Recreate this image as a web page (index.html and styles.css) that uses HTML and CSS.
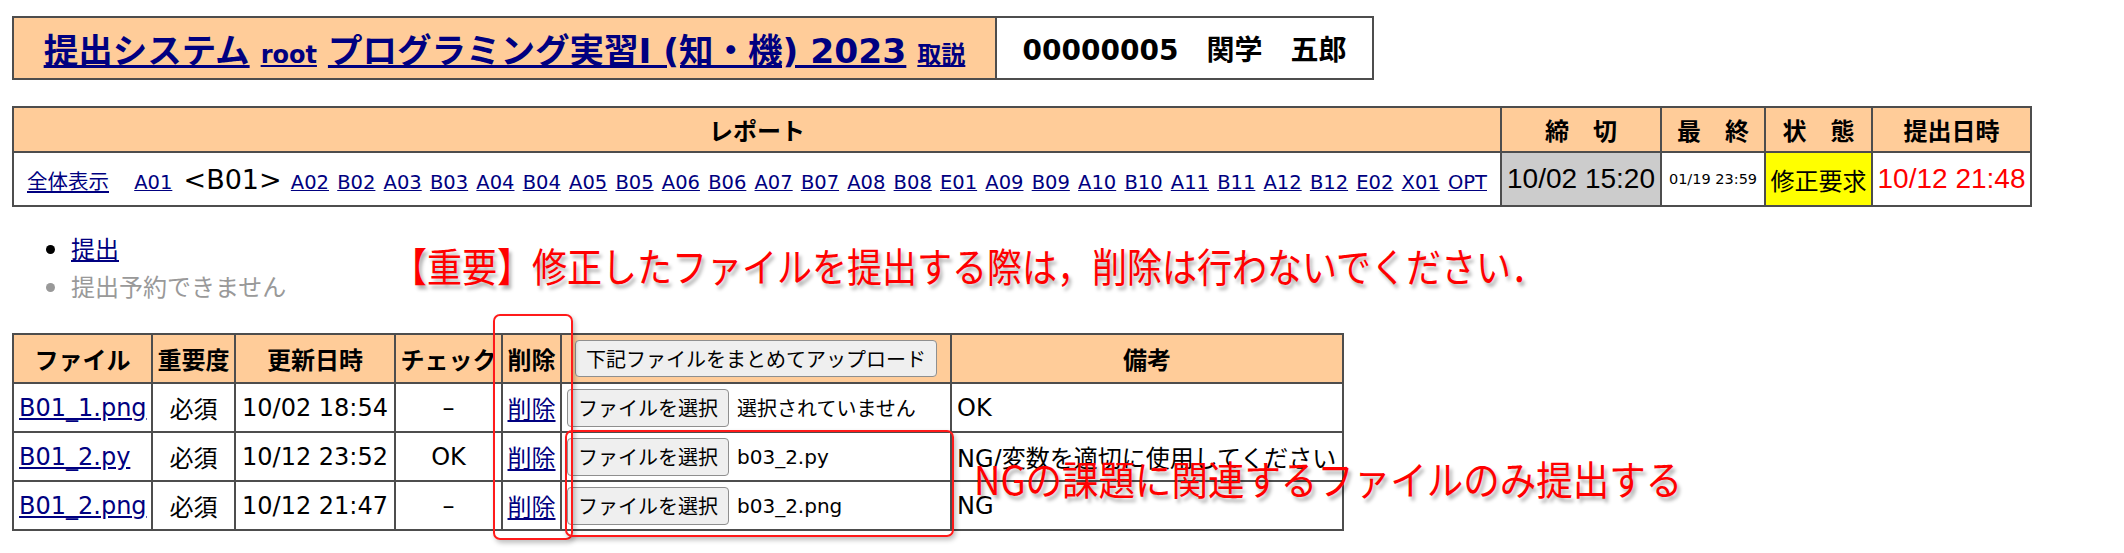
FILE: index.html
```html
<!DOCTYPE html>
<html lang="ja">
<head>
<meta charset="UTF-8" />
<meta name="viewport" content="width=device-width, initial-scale=1" />
<title>提出システム</title>
<link rel="stylesheet" href="styles.css">
</head>
<body>
  <div class="page">
    <table class="title-bar">
      <colgroup>
        <col class="c-title">
        <col class="c-user">
      </colgroup>
      <tr>
        <td class="title-links">
          <div class="title-row">
            <a href="#" class="big">提出システム</a>
            <a href="#" class="small">root</a>
            <a href="#" class="big">プログラミング実習Ⅰ (知・機) 2023</a>
            <a href="#" class="small">取説</a>
          </div>
        </td>
        <td class="user">00000005　関学　五郎</td>
      </tr>
    </table>

    <table class="reports">
      <colgroup>
        <col class="c-report">
        <col class="c-deadline">
        <col class="c-final">
        <col class="c-status">
        <col class="c-submitted">
      </colgroup>
      <tr>
        <th>レポート</th>
        <th>締　切</th>
        <th>最　終</th>
        <th>状　態</th>
        <th>提出日時</th>
      </tr>
      <tr>
        <td>
          <div class="report-nav">
            <a href="#" class="all">全体表示</a>
            <a href="#">A01</a>
            <span class="current">&lt;B01&gt;</span>
            <a href="#">A02</a>
            <a href="#">B02</a>
            <a href="#">A03</a>
            <a href="#">B03</a>
            <a href="#">A04</a>
            <a href="#">B04</a>
            <a href="#">A05</a>
            <a href="#">B05</a>
            <a href="#">A06</a>
            <a href="#">B06</a>
            <a href="#">A07</a>
            <a href="#">B07</a>
            <a href="#">A08</a>
            <a href="#">B08</a>
            <a href="#">E01</a>
            <a href="#">A09</a>
            <a href="#">B09</a>
            <a href="#">A10</a>
            <a href="#">B10</a>
            <a href="#">A11</a>
            <a href="#">B11</a>
            <a href="#">A12</a>
            <a href="#">B12</a>
            <a href="#">E02</a>
            <a href="#">X01</a>
            <a href="#">OPT</a>
          </div>
        </td>
        <td class="deadline">10/02 15:20</td>
        <td class="final">01/19 23:59</td>
        <td class="status">修正要求</td>
        <td class="submitted">10/12 21:48</td>
      </tr>
    </table>

    <ul class="actions">
      <li><a href="#">提出</a></li>
      <li class="disabled">提出予約できません</li>
    </ul>

    <table class="files">
      <colgroup>
        <col class="c-file">
        <col class="c-need">
        <col class="c-updated">
        <col class="c-check">
        <col class="c-delete">
        <col class="c-upload">
        <col class="c-memo">
      </colgroup>
      <tr>
        <th>ファイル</th>
        <th>重要度</th>
        <th>更新日時</th>
        <th>チェック</th>
        <th>削除</th>
        <th><button type="button" class="btn">下記ファイルをまとめてアップロード</button></th>
        <th>備考</th>
      </tr>
      <tr>
        <td class="name"><a href="#">B01_1.png</a></td>
        <td class="mid">必須</td>
        <td class="mid">10/02 18:54</td>
        <td class="mid">–</td>
        <td class="mid"><a href="#">削除</a></td>
        <td class="picker"><button type="button" class="btn">ファイルを選択</button><span class="picked">選択されていません</span></td>
        <td class="memo">OK</td>
      </tr>
      <tr>
        <td class="name"><a href="#">B01_2.py</a></td>
        <td class="mid">必須</td>
        <td class="mid">10/12 23:52</td>
        <td class="mid">OK</td>
        <td class="mid"><a href="#">削除</a></td>
        <td class="picker"><button type="button" class="btn">ファイルを選択</button><span class="picked">b03_2.py</span></td>
        <td class="memo">NG/変数を適切に使用してください</td>
      </tr>
      <tr>
        <td class="name"><a href="#">B01_2.png</a></td>
        <td class="mid">必須</td>
        <td class="mid">10/12 21:47</td>
        <td class="mid">–</td>
        <td class="mid"><a href="#">削除</a></td>
        <td class="picker"><button type="button" class="btn">ファイルを選択</button><span class="picked">b03_2.png</span></td>
        <td class="memo">NG</td>
      </tr>
    </table>

    <!-- red notes drawn over the page -->
    <p class="note note-warn">【重要】修正したファイルを提出する際は，削除は行わないでください．</p>
    <div class="frame frame-delete"></div>
    <div class="frame frame-inputs"></div>
    <p class="note note-ng">NGの課題に関連するファイルのみ提出する</p>
  </div>
</body>
</html>
```

FILE: styles.css
```css
body {
  margin: 0;
  font-family: "DejaVu Sans", "Noto Sans CJK JP", sans-serif;
  font-size: 24px;
  color: #000;
  background: #fff;
}

.page {
  position: relative;
  padding: 16px 12px 20px;
}

a {
  color: #000080;
}

table {
  border-collapse: collapse;
  table-layout: fixed;
}

th,
td {
  border: 2px solid #4d4d4d;
  padding: 0 4px;
  white-space: nowrap;
}

th {
  background: #ffcc99;
  font-weight: bold;
  text-align: center;
}

/* title bar */
.title-bar {
  width: 1360px;
}

.c-title { width: 983px; }
.c-user { width: 377px; }

.title-bar td {
  height: 60px;
  padding: 0;
  text-align: center;
}

.title-links {
  background: #ffcc99;
  font-weight: bold;
}

.title-row {
  display: flex;
  justify-content: center;
  align-items: baseline;
  gap: 11px;
}

.title-row .big {
  font-size: 34.5px;
}

.title-row .small {
  font-size: 24px;
}

.user {
  font-size: 28px;
  font-weight: bold;
}

/* report list */
.reports {
  width: 2018px;
  margin-top: 26px;
}

.c-report { width: 1488px; }
.c-deadline { width: 160px; }
.c-final { width: 104px; }
.c-status { width: 107px; }
.c-submitted { width: 159px; }

.reports th {
  height: 43px;
}

.reports td {
  height: 52px;
  padding: 0;
  text-align: center;
}

.report-nav {
  display: flex;
  justify-content: center;
  align-items: baseline;
  gap: 8.2px;
  font-size: 19.5px;
}

.report-nav .all {
  font-size: 20.5px;
  margin-right: 17px;
}

.report-nav .current {
  font-size: 27px;
  margin: 0 1px 0 3px;
}

.deadline,
.submitted {
  font-family: "Liberation Sans", sans-serif;
  font-size: 28px;
}

.deadline {
  background: #cccccc;
}

.submitted {
  color: #ff0000;
}

.final {
  font-size: 14.5px;
}

.status {
  background: #ffff00;
}

/* actions */
.actions {
  margin: 23px 0 27px;
  padding-left: 59px;
  line-height: 36px;
}

.actions li::marker {
  font-size: 30px;
}

.actions .disabled {
  color: #999999;
}

/* files */
.files {
  width: 1330px;
}

.c-file { width: 139px; }
.c-need { width: 83px; }
.c-updated { width: 160px; }
.c-check { width: 107px; }
.c-delete { width: 59px; }
.c-upload { width: 390px; }
.c-memo { width: 392px; }

.files th,
.files td {
  height: 47px;
}

.files th {
  padding: 0 2px;
}

.files .name {
  padding-left: 5px;
}

.files .mid {
  text-align: center;
}

.files .memo {
  font-size: 24px;
  padding-left: 5px;
}

.btn {
  font-family: inherit;
  font-size: 20px;
  color: #000;
  background: #efefef;
  border: 1px solid #8f8f8f;
  border-radius: 4px;
  padding: 0 10px;
  height: 38px;
  vertical-align: middle;
}

.files th .btn {
  height: 37px;
}

.picker {
  font-size: 20px;
  padding-left: 5px;
}

.picked {
  margin-left: 8px;
  vertical-align: middle;
}

/* red notes */
.note {
  position: absolute;
  margin: 0;
  font-family: "Noto Sans CJK JP", sans-serif;
  font-size: 40px;
  line-height: 40px;
  color: #ff0000;
  white-space: nowrap;
  transform-origin: left top;
  text-shadow: 3px 4px 4px rgba(0, 0, 0, 0.3);
}

.note-warn {
  left: 392px;
  top: 245px;
  transform: scaleX(0.875);
}

.note-ng {
  left: 974px;
  top: 458px;
  transform: scaleX(0.912);
}

.frame {
  position: absolute;
  border: 2px solid #ff1a1a;
  border-radius: 7px;
  box-shadow: 2px 3px 5px rgba(0, 0, 0, 0.25);
}

.frame-delete {
  left: 493px;
  top: 314px;
  width: 76px;
  height: 222px;
}

.frame-inputs {
  left: 565px;
  top: 430px;
  width: 385px;
  height: 103px;
}
```
